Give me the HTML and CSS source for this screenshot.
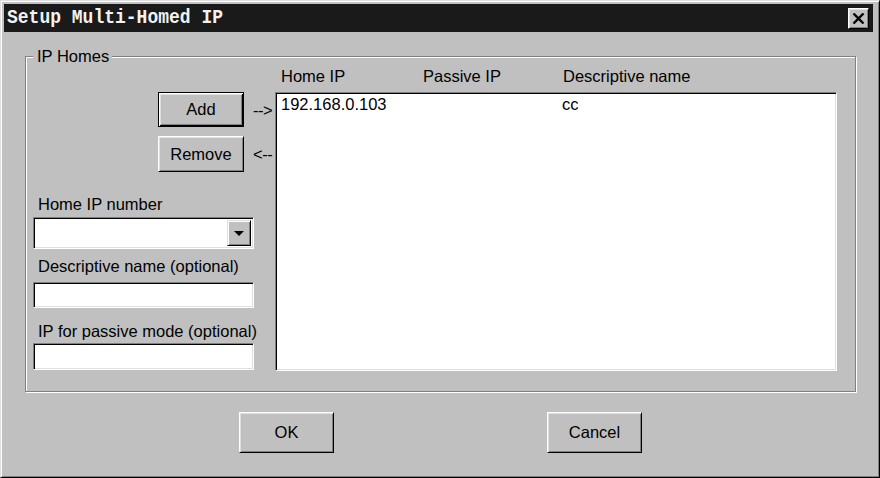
FILE: index.html
```html
<!DOCTYPE html>
<html lang="en">
<head>
    <meta charset="UTF-8">
    <title>Setup Multi-Homed IP</title>
    <link rel="stylesheet" href="styles.css">
</head>
<body>
    <div class="window">
        <div class="titlebar">
            <span class="title">Setup Multi-Homed IP</span>
            <button class="close-btn" aria-label="Close">
                <svg width="13" height="11" viewBox="0 0 13 11"><path d="M1.5 0.5 L11.5 10.5 M11.5 0.5 L1.5 10.5" stroke="#000" stroke-width="2.4" fill="none"/></svg>
            </button>
        </div>
        <div class="client">
            <div class="group">
                <span class="legend">IP Homes</span>
                <div class="left-panel">
                    <div class="btn-row">
                        <button class="btn btn-default btn-small">Add</button>
                        <span class="arrow">--&gt;</span>
                    </div>
                    <div class="btn-row btn-row-second">
                        <button class="btn btn-small">Remove</button>
                        <span class="arrow">&lt;--</span>
                    </div>
                    <label class="field-label label-home">Home IP number</label>
                    <div class="combo sunken">
                        <span class="combo-value"></span>
                        <span class="combo-btn"><span class="combo-arrow"></span></span>
                    </div>
                    <label class="field-label label-desc">Descriptive name (optional)</label>
                    <div class="textbox sunken tb-desc"></div>
                    <label class="field-label label-passive">IP for passive mode (optional)</label>
                    <div class="textbox sunken tb-passive"></div>
                </div>
                <div class="right-panel">
                    <div class="list-head">
                        <span>Home IP</span>
                        <span>Passive IP</span>
                        <span>Descriptive name</span>
                    </div>
                    <div class="list sunken">
                        <div class="list-row">
                            <span>192.168.0.103</span>
                            <span></span>
                            <span>cc</span>
                        </div>
                    </div>
                </div>
            </div>
            <div class="footer">
                <button class="btn btn-large">OK</button>
                <button class="btn btn-large">Cancel</button>
            </div>
        </div>
    </div>
</body>
</html>
```

FILE: styles.css
```css
:root {
    --face: #c0c0c0;
    --light: #dfdfdf;
    --shadow: #808080;
    --dark: #000;
}
body { margin: 0; background: var(--face); font-family: "Liberation Sans", Arial, sans-serif; font-size: 16.5px; color: #000; }
button { font-family: inherit; font-size: 16.5px; color: #000; padding: 0; cursor: default; }

.window { box-sizing: border-box; width: 880px; height: 478px; background: var(--face); border: 1px solid; border-color: var(--light) var(--dark) var(--dark) var(--light); box-shadow: inset 1px 1px #fff, inset -1px -1px var(--shadow); padding: 3px 6px 0 3px; }

.titlebar { height: 28px; background: #1a1a1a; display: flex; align-items: center; justify-content: space-between; padding: 0 4px 0 3px; }
.title { font-family: "Liberation Mono", "Courier New", monospace; font-weight: bold; font-size: 18px; line-height: 24px; padding-top: 3px; color: #f2f2f2; align-self: flex-start; transform: scaleY(1.12); transform-origin: bottom; }
.close-btn { width: 21px; height: 21px; background: var(--face); border: 1px solid; border-color: #fff var(--dark) var(--dark) #fff; box-shadow: inset 1px 1px var(--light), inset -1px -1px var(--shadow); display: flex; align-items: center; justify-content: center; }

.client { padding: 24px 0 0 21px; }

/* etched group frame */
.group { position: relative; box-sizing: border-box; width: 831px; display: flex; padding: 9px 18px 20px 7px; border: 1px solid var(--shadow); box-shadow: inset 1px 1px #fff, 1px 1px #fff; }
.legend { position: absolute; top: -10px; left: 7px; line-height: 18px; padding: 0 3px 0 4px; background: var(--face); }

.left-panel { width: 242px; padding-top: 26px; display: flex; flex-direction: column; }
.btn-row { display: flex; align-items: center; padding-left: 125px; }
.btn-row-second { margin-top: 9px; }
.arrow { margin-left: 9px; line-height: 20px; letter-spacing: -0.5px; }

.btn { box-sizing: border-box; background: var(--face); border: 1px solid; border-color: #fff var(--dark) var(--dark) #fff; box-shadow: inset 1px 1px var(--light), inset -1px -1px var(--shadow); }
.btn-default { border-color: var(--dark); box-shadow: inset 1px 1px #fff, inset -1px -1px var(--dark), inset 2px 2px var(--light), inset -2px -2px var(--shadow); }
.btn-small { width: 86px; height: 35px; }
.btn-row-second .btn-small { height: 36px; }
.btn-large { width: 95px; height: 41px; }

.sunken { box-sizing: border-box; background: #fff; border: 1px solid; border-color: var(--shadow) #fff #fff var(--shadow); box-shadow: inset 1px 1px var(--dark), inset -1px -1px var(--light); }

.field-label { display: block; line-height: 20px; padding-left: 5px; }
.label-home { margin-top: 22px; }
.label-desc { margin-top: 7px; }
.label-passive { margin-top: 13px; }

.combo { width: 221px; height: 32px; margin-top: 3px; display: flex; justify-content: flex-end; padding: 2px; }
.combo-btn { box-sizing: border-box; width: 24px; height: 100%; background: var(--face); border: 1px solid; border-color: var(--light) var(--dark) var(--dark) var(--light); box-shadow: inset 1px 1px #fff, inset -1px -1px var(--shadow); display: flex; align-items: center; justify-content: center; }
.combo-arrow { width: 0; height: 0; border-left: 5px solid transparent; border-right: 5px solid transparent; border-top: 5px solid var(--dark); }

.textbox { width: 221px; }
.tb-desc { height: 26px; margin-top: 6px; }
.tb-passive { height: 27px; margin-top: 2px; }

.right-panel { flex: 1; display: flex; flex-direction: column; }
.list-head { display: grid; grid-template-columns: 142px 140px 1fr; padding-left: 6px; line-height: 20px; }
.list { height: 279px; margin-top: 6px; padding: 1px 5px 0; }
.list-row { display: grid; grid-template-columns: 141px 140px 1fr; line-height: 20px; }

.footer { display: flex; justify-content: center; gap: 213px; margin: 20px 0 0 -17px; }
```
